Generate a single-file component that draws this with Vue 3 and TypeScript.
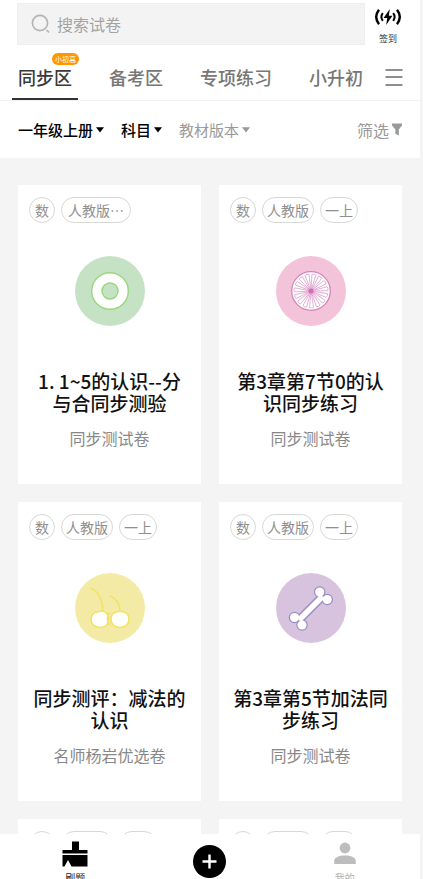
<script setup lang="ts">
import { ref } from 'vue'

type Art = 'ring' | 'citrus' | 'cherry' | 'bone'

interface Paper {
  id: number
  tags: string[]
  art: Art
  title: string
  source: string
}

const keyword = ref('')
const activeTab = ref('同步区')
const tabs = [
  { name: '同步区', badge: '小初高' },
  { name: '备考区', badge: '' },
  { name: '专项练习', badge: '' },
  { name: '小升初', badge: '' },
]

const filters = [
  { name: '一年级上册', chosen: true },
  { name: '科目', chosen: true },
  { name: '教材版本', chosen: false },
]

const papers: Paper[] = [
  { id: 1, tags: ['数', '人教版…'], art: 'ring', title: '1. 1~5的认识--分与合同步测验', source: '同步测试卷' },
  { id: 2, tags: ['数', '人教版', '一上'], art: 'citrus', title: '第3章第7节0的认识同步练习', source: '同步测试卷' },
  { id: 3, tags: ['数', '人教版', '一上'], art: 'cherry', title: '同步测评：减法的认识', source: '名师杨岩优选卷' },
  { id: 4, tags: ['数', '人教版', '一上'], art: 'bone', title: '第3章第5节加法同步练习', source: '同步测试卷' },
  { id: 5, tags: ['数', '人教版', '一上'], art: 'ring', title: '', source: '' },
  { id: 6, tags: ['数', '人教版', '一上'], art: 'citrus', title: '', source: '' },
]

const segments = Array.from({ length: 15 }, (_, i) => i * 24 + 10)
</script>

<template>
  <div class="app">
    <header class="top">
      <div class="search-row">
        <label class="search">
          <svg width="20" height="20" viewBox="0 0 20 20" fill="none" stroke="#b4b4b4" stroke-width="1.6" aria-hidden="true">
            <circle cx="9" cy="9" r="7.6" />
            <path d="M15.6 16.2 L18 18.4" />
          </svg>
          <input v-model="keyword" type="search" placeholder="搜索试卷" aria-label="搜索试卷" />
        </label>
        <button class="signin" type="button">
          <svg width="28" height="18" viewBox="0 0 28 18" fill="none" stroke="#000" aria-hidden="true">
            <path d="M5 1.8 Q-.6 9 5 16.2 M23 1.8 Q28.600 9 23 16.2" stroke-width="2.4" />
            <path d="M8.800 5.200 Q6 9 8.800 12.800 M19.200 5.200 Q22 9 19.200 12.800" stroke-width="2" />
            <path d="M15.800 1 L9.600 10 H13.200 L12.200 17 L18.400 7.800 H14.800 Z" fill="#000" stroke="none" />
          </svg>
          <span>签到</span>
        </button>
      </div>

      <nav class="tabs">
        <div class="tab-group">
          <button
            v-for="tab in tabs"
            :key="tab.name"
            type="button"
            class="tab"
            :class="{ active: tab.name === activeTab }"
            @click="activeTab = tab.name"
          >
            {{ tab.name }}
            <span v-if="tab.badge" class="badge">{{ tab.badge }}</span>
          </button>
        </div>
        <button type="button" class="more" aria-label="更多">
          <svg width="18" height="18" viewBox="0 0 18 18" stroke="#8e8e8e" stroke-width="2" aria-hidden="true">
            <path d="M0.500 2 H17.500 M0.500 9 H17.500 M0.500 17 H17.500" />
          </svg>
        </button>
      </nav>

      <div class="filters">
        <button v-for="item in filters" :key="item.name" type="button" class="filter" :class="{ chosen: item.chosen }">
          {{ item.name }}
          <svg width="8" height="6" viewBox="0 0 8 6" aria-hidden="true"><path d="M0 .3 H8 L4 5.600 Z" fill="currentColor" /></svg>
        </button>
        <button type="button" class="filter sift">
          筛选
          <svg width="12" height="13" viewBox="0 0 12 13" aria-hidden="true">
            <path d="M1 .5 H11 V2.500 L7.800 6.500 V12.500 L4.400 10.800 V6.500 L1 2.500 Z" fill="currentColor" />
          </svg>
        </button>
      </div>
    </header>

    <main class="list">
      <article v-for="paper in papers" :key="paper.id" class="card">
        <div class="tags">
          <span v-for="tag in paper.tags" :key="tag" class="tag" :class="{ clipped: tag.endsWith('…') }">{{ tag }}</span>
        </div>

        <svg class="art" viewBox="0 0 70 70" fill="none" aria-hidden="true">
          <template v-if="paper.art === 'ring'">
            <circle cx="35" cy="35" r="35" fill="#c5e2c5" />
            <circle cx="35" cy="35" r="18.300" fill="#fff" stroke="#9bd67c" stroke-width="1.400" />
            <circle cx="35" cy="35" r="8" fill="#c5e2c5" stroke="#9bd67c" stroke-width="1.400" />
          </template>
          <template v-else-if="paper.art === 'citrus'">
            <circle cx="35" cy="35" r="35" fill="#f3c3da" />
            <circle cx="35" cy="35" r="19.300" fill="#fff" stroke="#d483bb" stroke-width="1.300" />
            <path
              v-for="angle in segments"
              :key="angle"
              d="M35 35 L33 18.500 Q35 17.200 37 18.500 Z"
              :transform="`rotate(${angle} 35 35)`"
              stroke="#dda3cd"
              stroke-width=".8"
              stroke-linejoin="round"
            />
            <circle cx="35" cy="35" r="2.500" fill="#d36db4" />
          </template>
          <template v-else-if="paper.art === 'cherry'">
            <circle cx="35" cy="35" r="35" fill="#f3eba5" />
            <g stroke="#f2e364" stroke-width="1.600" stroke-linecap="round">
              <path d="M16.500 15.500 C24 19 28 28 27.500 38 M35.500 23 C41 26 45 31 45 38" />
              <path d="M24.500 38.500 C30 37.500 33.500 40 33.500 46 C33.500 51.500 30 54.500 25 54.500 C19.500 54.500 16 51 16 46 C16 41 19 39 24.500 38.500 Z" fill="#fff" />
              <path d="M45 38.500 C51 38 54 41.500 54 46 C54 51 50.500 54.500 45 54.500 C39.500 54.500 36 51 36 46 C36 41 39 38.500 45 38.500 Z" fill="#fff" />
            </g>
            <path d="M34.500 39.500 C32 43 32 49 34.500 52.500" stroke="#f2e364" stroke-width="2" />
          </template>
          <template v-else>
            <circle cx="35" cy="35" r="35" fill="#d8c3de" />
            <g stroke="#9b8cc4" stroke-width="1.600" fill="#9b8cc4">
              <circle cx="43.700" cy="19" r="5" />
              <circle cx="51.200" cy="26.500" r="5" />
              <circle cx="18.500" cy="44.500" r="5" />
              <circle cx="26" cy="52" r="5" />
              <path d="M46 24 L23.500 46.500" stroke-width="8.600" />
            </g>
            <g fill="#fff">
              <circle cx="43.700" cy="19" r="4.600" />
              <circle cx="51.200" cy="26.500" r="4.600" />
              <circle cx="18.500" cy="44.500" r="4.600" />
              <circle cx="26" cy="52" r="4.600" />
              <path d="M46.500 23.500 L23 47" stroke="#fff" stroke-width="5.600" />
            </g>
          </template>
        </svg>

        <h2>{{ paper.title }}</h2>
        <p>{{ paper.source }}</p>
      </article>
    </main>

    <nav class="dock">
      <a href="#practice" class="dock-item current">
        <svg width="26" height="26" viewBox="0 0 26 26" fill="#000" aria-hidden="true">
          <path d="M10 .5 H17 V9 H25.500 V12.500 H.5 V9 H10 Z" />
          <path d="M.5 14 H25.500 V25.500 H9.500 L6 19 L2.500 25.500 H.5 Z" />
        </svg>
        <span>刷题</span>
      </a>
      <button type="button" class="add" aria-label="添加">
        <svg width="33" height="33" viewBox="0 0 33 33" aria-hidden="true">
          <circle cx="16.500" cy="16.500" r="16.500" fill="#000" />
          <path d="M9.500 16.500 H23.500 M16.500 9.500 V23.500" stroke="#fff" stroke-width="2.400" />
        </svg>
      </button>
      <a href="#me" class="dock-item">
        <svg width="26" height="26" viewBox="0 0 26 26" fill="#bdbdbd" aria-hidden="true">
          <circle cx="13" cy="7" r="5.400" />
          <path d="M2.200 23 V20 C2.200 16.500 7 14.600 13 14.600 S23.800 16.500 23.800 20 V23 Z" />
        </svg>
        <span>我的</span>
      </a>
    </nav>
  </div>
</template>

<style>
body {
  margin: 0;
  background: #f4f4f4;
}
</style>

<style scoped>
.app {
  display: flex;
  flex-direction: column;
  height: 100vh;
  margin-right: 3px;
  overflow: hidden;
  background: #f4f4f4;
  font-family: 'Noto Sans CJK SC', 'Noto Sans', sans-serif;
}

button,
input {
  margin: 0;
  padding: 0;
  border: 0;
  background: none;
  font: inherit;
  color: inherit;
}

svg {
  display: block;
  flex: none;
}

.top {
  flex: none;
  background: #fff;
}

.search-row {
  display: flex;
  align-items: center;
  gap: 9px;
  padding: 3px 18px 0 17px;
}

.search {
  display: flex;
  flex: 1;
  align-items: center;
  gap: 6px;
  box-sizing: border-box;
  height: 42px;
  padding: 0 13px;
  border: 1px solid #eee;
  background: #f3f3f3;
}

.search input {
  flex: 1;
  min-width: 0;
  outline: none;
  font-size: 16px;
  line-height: 24px;
  color: #333;
}

.search input::placeholder {
  color: #a3a3a3;
  opacity: 1;
}

.signin {
  display: flex;
  flex-direction: column;
  align-items: center;
  gap: 6px;
  width: 28px;
  padding-top: 4px;
  font-size: 9px;
  line-height: 13px;
  color: #333;
}

.tabs {
  display: flex;
  justify-content: space-between;
  height: 55px;
  padding: 0 17px 0 18px;
  border-bottom: 1px solid #f3f3f3;
}

.tab-group {
  display: flex;
  gap: 37px;
}

.tab {
  position: relative;
  padding-top: 9px;
  font-size: 18px;
  font-weight: 500;
  line-height: 46px;
  white-space: nowrap;
  color: #777;
}

.tab.active {
  color: #3a3a3a;
}

.tab.active::after {
  content: '';
  position: absolute;
  right: -6px;
  bottom: 0;
  left: -6px;
  height: 2px;
  background: #333;
}

.badge {
  position: absolute;
  top: 8px;
  right: -7px;
  padding: 0 3px;
  border-radius: 6px;
  background: #ff9800;
  font-size: 7px;
  font-weight: 400;
  line-height: 12px;
  color: #fff;
}

.more {
  padding-top: 9px;
}

.filters {
  display: flex;
  align-items: center;
  gap: 17px;
  height: 57px;
  padding: 0 17px 0 18px;
}

.filter {
  display: flex;
  align-items: center;
  gap: 3px;
  font-size: 15px;
  line-height: 22px;
  white-space: nowrap;
  color: #999;
}

.filter.chosen {
  font-weight: 500;
  color: #000;
}

.filter.sift {
  gap: 2px;
  margin-left: auto;
  font-size: 16px;
}

.list {
  display: grid;
  flex: 1;
  grid-template-columns: 1fr 1fr;
  gap: 18px;
  align-content: start;
  min-height: 0;
  padding: 27px 18px 18px;
  overflow-y: auto;
  scrollbar-width: none;
}

.card {
  display: flex;
  flex-direction: column;
  align-items: center;
  padding: 12px 11px 35px;
  background: #fff;
  text-align: center;
}

.tags {
  display: flex;
  gap: 6px;
  align-self: stretch;
}

.tag {
  box-sizing: border-box;
  min-width: 26px;
  padding: 0 4px;
  border: 1px solid #d6d8d6;
  border-radius: 13px;
  font-size: 14px;
  line-height: 24px;
  color: #8f8f8f;
}

.tag.clipped {
  padding: 0 6px;
}

.art {
  width: 70px;
  height: 70px;
  margin-top: 33px;
}

.card h2 {
  margin: 44px 0 0;
  font-size: 19px;
  font-weight: 500;
  line-height: 22px;
  color: #111;
}

.card p {
  margin: 13px 0 0;
  font-size: 16px;
  line-height: 22px;
  color: #888;
}

.dock {
  display: grid;
  flex: none;
  grid-template-columns: 1fr 1fr 1fr;
  justify-items: center;
  box-sizing: border-box;
  height: 45px;
  padding: 7px 8px 0;
  overflow: hidden;
  background: #fff;
}

.dock-item {
  display: flex;
  flex-direction: column;
  align-items: center;
  gap: 4px;
  font-size: 10px;
  line-height: 14px;
  text-decoration: none;
  color: #b0b0b0;
}

.dock-item.current {
  color: #222;
}

.add {
  align-self: start;
  padding-top: 4px;
}
</style>
